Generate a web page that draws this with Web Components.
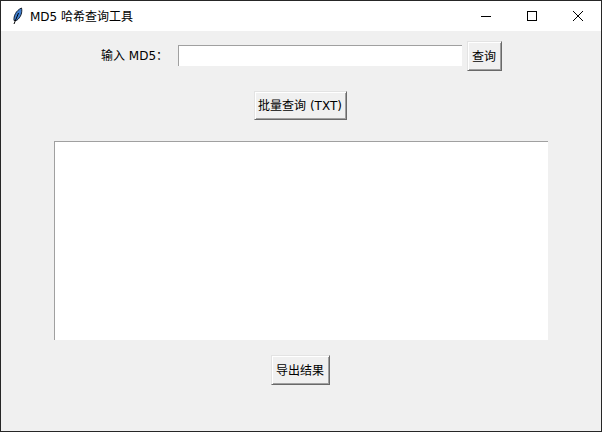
<!DOCTYPE html>
<html lang="zh"><head><meta charset="utf-8"><style>
html,body{margin:0;padding:0;background:#f0f0f0}
body{width:602px;height:432px;overflow:hidden;font:12px "DejaVu Sans","Noto Sans CJK SC",sans-serif}
</style></head><body>
<tk-window heading="MD5 哈希查询工具">
  <tk-label slot="label">输入 MD5：</tk-label>
  <tk-field slot="input" class="in"></tk-field>
  <tk-button slot="query">查询</tk-button>
  <tk-button slot="batch">批量查询 (TXT)</tk-button>
  <tk-field slot="result"></tk-field>
  <tk-button slot="export">导出结果</tk-button>
</tk-window>
<script>
const FONT='"DejaVu Sans","Noto Sans CJK SC",sans-serif';
class TkLabel extends HTMLElement{constructor(){super();this.attachShadow({mode:'open'}).innerHTML=`<style>
:host{display:block;font:12px ${FONT};color:#000;white-space:nowrap;padding-bottom:3px}
</style><slot></slot>`}}
customElements.define('tk-label',TkLabel);
class TkButton extends HTMLElement{constructor(){super();this.attachShadow({mode:'open'}).innerHTML=`<style>
:host{display:flex;box-sizing:border-box;width:100%;height:100%;align-items:center;justify-content:center;padding:0 1px 2px 0;background:#f0f0f0;color:#000;border:1px solid;border-color:#e3e3e3 #696969 #696969 #e3e3e3;box-shadow:inset 1px 1px 0 #fff,inset -1px -1px 0 #a0a0a0;font:12px ${FONT};white-space:nowrap}
</style><slot></slot>`}}
customElements.define('tk-button',TkButton);
class TkField extends HTMLElement{constructor(){super();this.attachShadow({mode:'open'}).innerHTML=`<style>
:host{display:block;box-sizing:border-box;width:100%;height:100%;background:#fff;border-top:1px solid #a0a0a0;border-left:1px solid #a0a0a0}
</style>`}}
customElements.define('tk-field',TkField);
class TkWindow extends HTMLElement{constructor(){super();const h=this.getAttribute('heading');this.attachShadow({mode:'open'}).innerHTML=`<style>
:host{display:flex;flex-direction:column;box-sizing:border-box;width:602px;height:432px;border:1px solid #262626;background:#f0f0f0;font:12px ${FONT};color:#000}
.bar{height:30px;background:#fff;display:flex;align-items:center;flex:none}
.ic{margin-left:10px;width:14px;height:18px;flex:none}
.t{margin-left:5px;flex:1;white-space:nowrap;padding-bottom:2px}
.c{display:flex;align-items:center;justify-content:center;width:46px;height:30px}
.body{flex:1;display:flex;flex-direction:column;align-items:flex-start;padding-top:10px}
.row{display:flex;align-items:flex-start;height:30px}
.lb{margin-left:100px;width:77px;height:30px;display:flex;align-items:center}
.in{width:284px;height:21px;margin-top:4px}
.q{width:35px;height:30px;margin-left:5px}
.b{width:93px;height:29px;margin:20px 0 0 253px}
.ta{width:494px;height:199px;margin:21px 0 0 53px}
.e{width:59px;height:30px;margin:15px 0 0 270px}
</style>
<div class="bar">
<svg class="ic" viewBox="0 0 14 18"><path d="M3 13.500C2.500 9 5 3.500 10.500 1C11.500 5 10 10.500 5.500 13.500Z" fill="#3f7fd0" stroke="#16202e" stroke-width="1"/><path d="M3 17L7.500 6" stroke="#000" fill="none"/></svg>
<div class="t">${h}</div>
<div class="c"><svg width="12" height="12"><path d="M1 6.500H11" stroke="#000" fill="none"/></svg></div>
<div class="c"><svg width="12" height="12"><rect x="1.500" y="1.500" width="9" height="9" stroke="#000" fill="none"/></svg></div>
<div class="c"><svg width="12" height="12"><path d="M1 1L11 11M11 1L1 11" stroke="#000" fill="none"/></svg></div>
</div>
<div class="body">
<div class="row"><div class="lb"><slot name="label"></slot></div><div class="in"><slot name="input"></slot></div><div class="q"><slot name="query"></slot></div></div>
<div class="b"><slot name="batch"></slot></div>
<div class="ta"><slot name="result"></slot></div>
<div class="e"><slot name="export"></slot></div>
</div>`}}
customElements.define('tk-window',TkWindow);
</script>
</body></html>
